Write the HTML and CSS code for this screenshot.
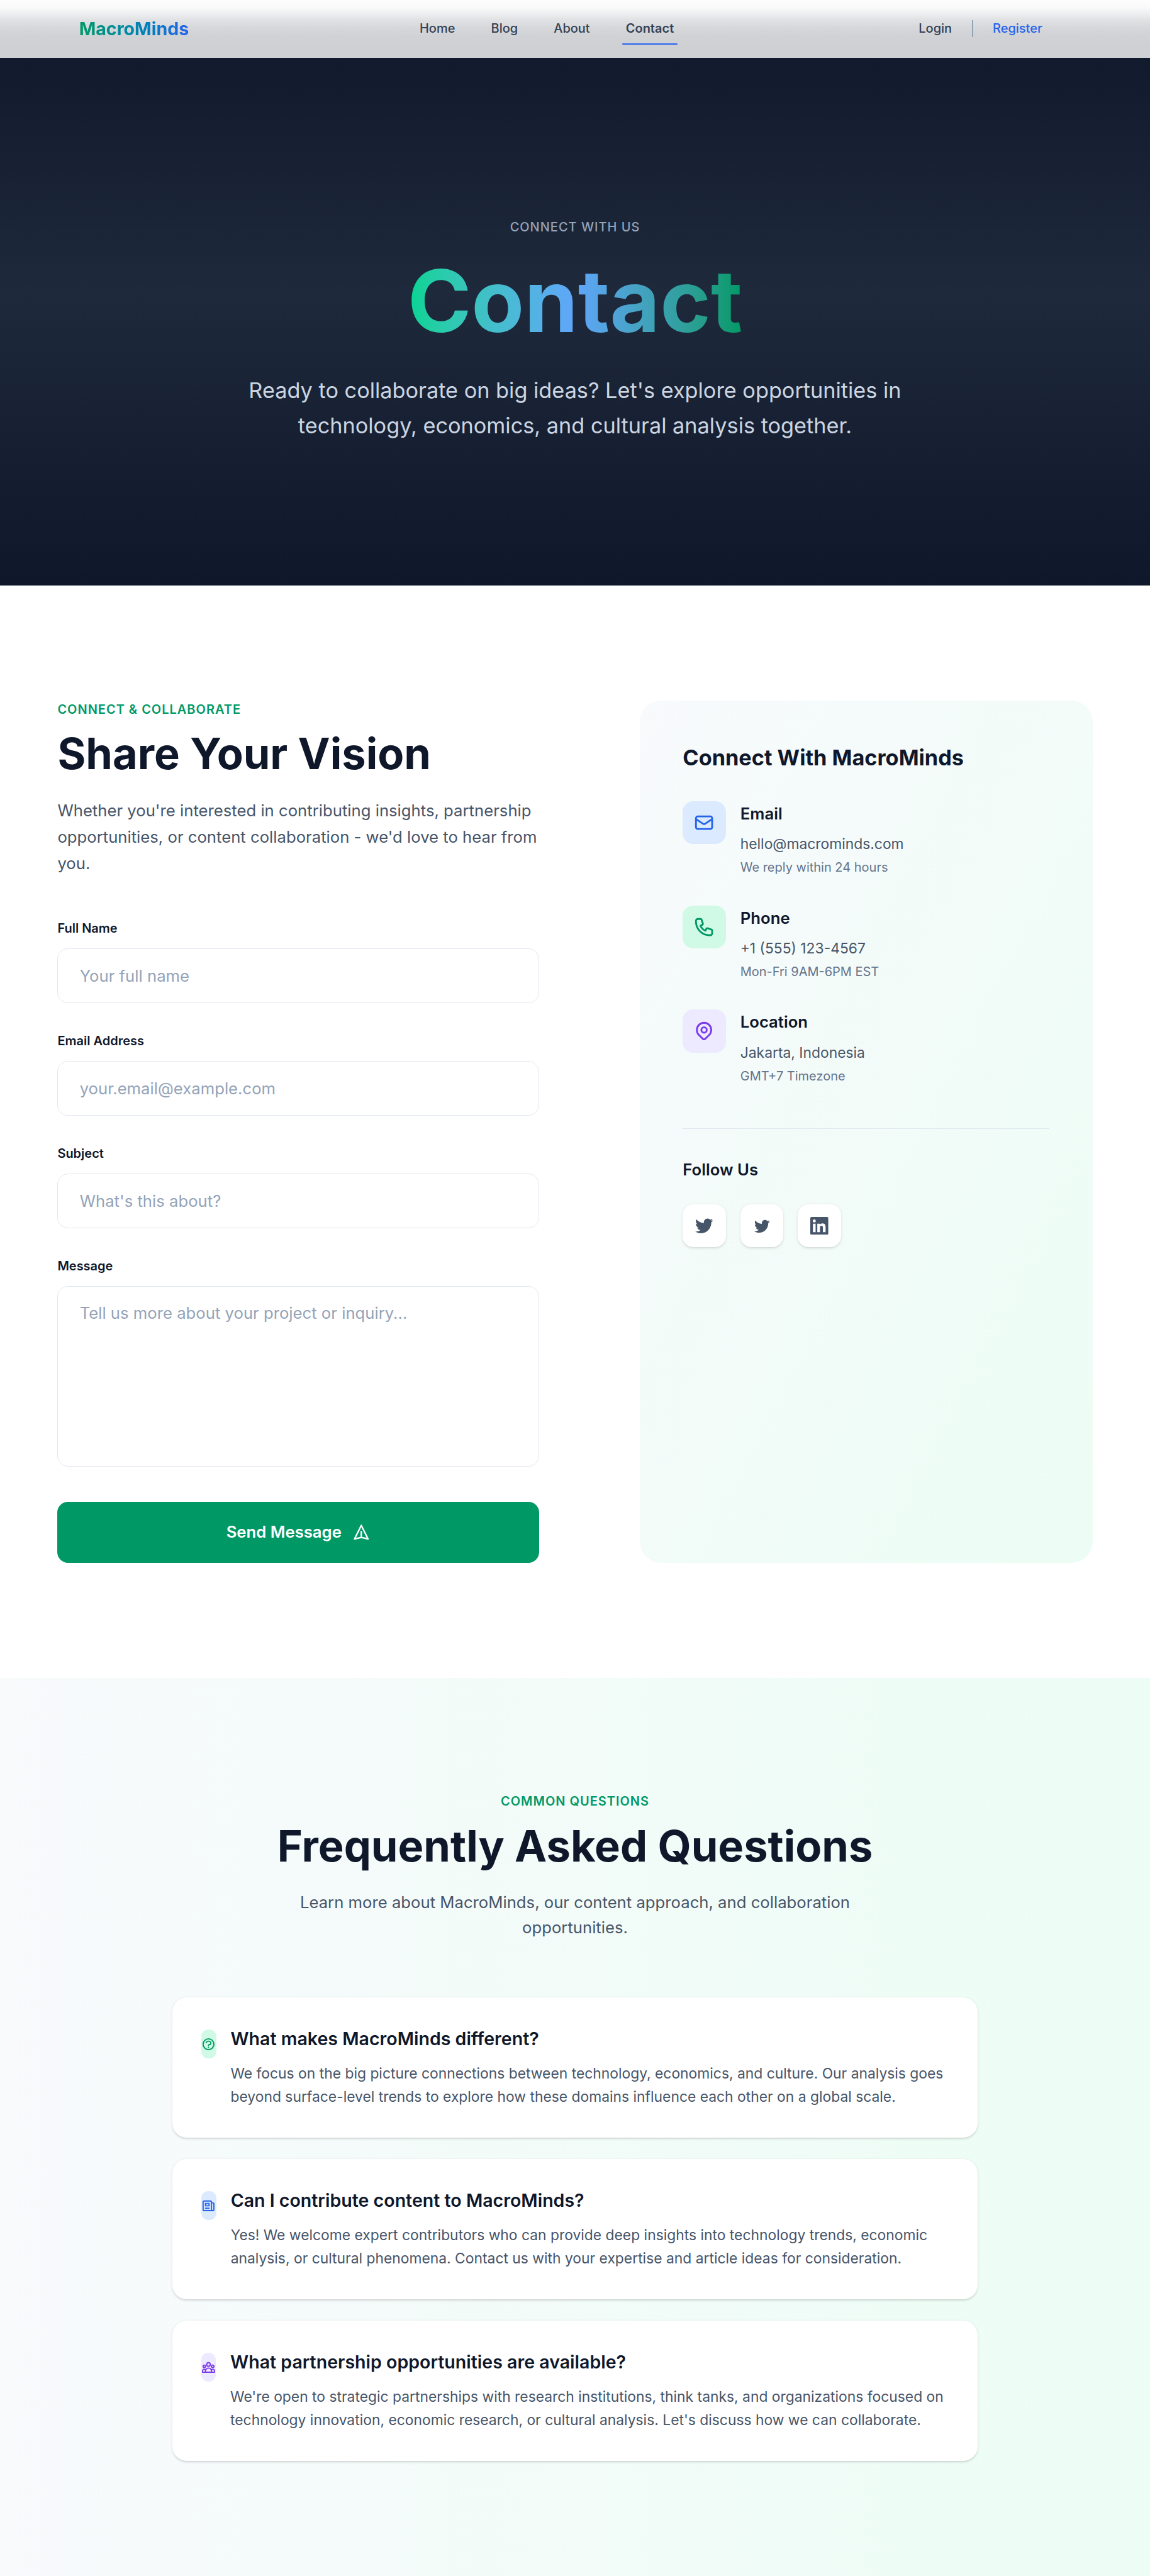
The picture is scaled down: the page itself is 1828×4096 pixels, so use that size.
FILE: index.html
```html
<!DOCTYPE html>
<html lang="en">
<head>
<meta charset="utf-8">
<title>Contact - MacroMinds</title>
<link rel="stylesheet" href="styles.css">
</head>
<body>
<div class="top">
  <header class="nav">
    <a class="logo">MacroMinds</a>
    <nav class="links">
      <a>Home</a><a>Blog</a><a>About</a><a class="active">Contact</a>
    </nav>
    <div class="auth"><a>Login</a><span class="sep"></span><a class="register">Register</a></div>
  </header>
  <section class="hero">
    <p class="hero-label">CONNECT WITH US</p>
    <h1>Contact</h1>
    <p class="hero-text">Ready to collaborate on big ideas? Let's explore opportunities in technology, economics, and cultural analysis together.</p>
  </section>
</div>

<section class="contact">
  <div class="form-col">
    <p class="eyebrow">CONNECT &amp; COLLABORATE</p>
    <h2>Share Your Vision</h2>
    <p class="intro">Whether you're interested in contributing insights, partnership opportunities, or content collaboration - we'd love to hear from you.</p>
    <form class="form">
      <div class="field"><label>Full Name</label><input type="text" placeholder="Your full name"></div>
      <div class="field"><label>Email Address</label><input type="email" placeholder="your.email@example.com"></div>
      <div class="field"><label>Subject</label><input type="text" placeholder="What's this about?"></div>
      <div class="field message"><label>Message</label><textarea placeholder="Tell us more about your project or inquiry..."></textarea></div>
      <button type="button" class="send"><span>Send Message</span>
        <svg class="line" viewBox="0 0 24 24"><path d="M12 19l9 2-9-18-9 18 9-2zm0 0v-8"/></svg>
      </button>
    </form>
  </div>

  <aside class="card">
    <h3>Connect With MacroMinds</h3>
    <div class="ways">
      <div class="way">
        <div class="tile blue"><svg class="line" viewBox="0 0 24 24"><path d="M3 8l7.89 5.26a2 2 0 002.22 0L21 8M5 19h14a2 2 0 002-2V7a2 2 0 00-2-2H5a2 2 0 00-2 2v10a2 2 0 002 2z"/></svg></div>
        <div><h4>Email</h4><p class="value">hello@macrominds.com</p><p class="note">We reply within 24 hours</p></div>
      </div>
      <div class="way">
        <div class="tile green"><svg class="line" viewBox="0 0 24 24"><path d="M3 5a2 2 0 012-2h3.28a1 1 0 01.948.684l1.498 4.493a1 1 0 01-.502 1.21l-2.257 1.13a11.042 11.042 0 005.516 5.516l1.13-2.257a1 1 0 011.21-.502l4.493 1.498a1 1 0 01.684.949V19a2 2 0 01-2 2h-1C9.716 21 3 14.284 3 6V5z"/></svg></div>
        <div><h4>Phone</h4><p class="value">+1 (555) 123-4567</p><p class="note">Mon-Fri 9AM-6PM EST</p></div>
      </div>
      <div class="way">
        <div class="tile violet"><svg class="line" viewBox="0 0 24 24"><path d="M17.657 16.657L13.414 20.9a1.998 1.998 0 01-2.827 0l-4.244-4.243a8 8 0 1111.314 0z"/><path d="M15 11a3 3 0 11-6 0 3 3 0 016 0z"/></svg></div>
        <div><h4>Location</h4><p class="value">Jakarta, Indonesia</p><p class="note">GMT+7 Timezone</p></div>
      </div>
    </div>
    <div class="follow">
      <h4>Follow Us</h4>
      <div class="socials">
        <a class="social"><svg viewBox="0 0 24 24"><path d="M23.953 4.57a10 10 0 01-2.825.775 4.958 4.958 0 002.163-2.723c-.951.555-2.005.959-3.127 1.184a4.92 4.92 0 00-8.384 4.482C7.69 8.095 4.067 6.13 1.64 3.162a4.822 4.822 0 00-.666 2.475c0 1.71.87 3.213 2.188 4.096a4.904 4.904 0 01-2.228-.616v.06a4.923 4.923 0 003.946 4.827 4.996 4.996 0 01-2.212.085 4.936 4.936 0 004.604 3.417 9.867 9.867 0 01-6.102 2.105c-.39 0-.779-.023-1.17-.067a13.995 13.995 0 007.557 2.209c9.053 0 13.998-7.496 13.998-13.985 0-.21 0-.42-.015-.63A9.935 9.935 0 0024 4.59z"/></svg></a>
        <a class="social"><svg viewBox="0 0 24 24"><path d="M22.46 6c-.77.35-1.6.58-2.46.69.88-.53 1.56-1.37 1.88-2.38-.83.5-1.75.85-2.72 1.05C18.37 4.5 17.26 4 16 4c-2.35 0-4.27 1.92-4.27 4.29 0 .34.04.67.11.98C8.28 9.09 5.11 7.38 3 4.79c-.37.63-.58 1.37-.58 2.15 0 1.49.75 2.81 1.91 3.56-.71 0-1.37-.2-1.95-.5v.03c0 2.08 1.48 3.82 3.44 4.21a4.22 4.22 0 01-1.93.07 4.28 4.28 0 004 2.98 8.521 8.521 0 01-5.33 1.84c-.34 0-.68-.02-1.02-.06C3.44 20.29 5.7 21 8.12 21 16 21 20.33 14.46 20.33 8.79c0-.19 0-.37-.01-.56.84-.6 1.56-1.36 2.14-2.23z"/></svg></a>
        <a class="social"><svg viewBox="0 0 24 24"><path d="M20.447 20.452h-3.554v-5.569c0-1.328-.027-3.037-1.852-3.037-1.853 0-2.136 1.445-2.136 2.939v5.667H9.351V9h3.414v1.561h.046c.477-.9 1.637-1.85 3.37-1.85 3.601 0 4.267 2.37 4.267 5.455v6.286zM5.337 7.433a2.062 2.062 0 01-2.063-2.065 2.064 2.064 0 112.063 2.065zm1.782 13.019H3.555V9h3.564v11.452zM22.225 0H1.771C.792 0 0 .774 0 1.729v20.542C0 23.227.792 24 1.771 24h20.451C23.2 24 24 23.227 24 22.271V1.729C24 .774 23.2 0 22.222 0h.003z"/></svg></a>
      </div>
    </div>
  </aside>
</section>

<section class="faq">
  <p class="eyebrow">COMMON QUESTIONS</p>
  <h2>Frequently Asked Questions</h2>
  <p class="faq-intro">Learn more about MacroMinds, our content approach, and collaboration opportunities.</p>
  <div class="faq-list">
    <article class="question">
      <div class="badge green"><svg class="line" viewBox="0 0 24 24"><path d="M8.228 9c.549-1.165 2.03-2 3.772-2 2.21 0 4 1.343 4 3 0 1.4-1.278 2.575-3.006 2.907-.542.104-.994.54-.994 1.093m0 3h.01M21 12a9 9 0 11-18 0 9 9 0 0118 0z"/></svg></div>
      <div><h3>What makes MacroMinds different?</h3>
      <p>We focus on the big picture connections between technology, economics, and culture. Our analysis goes beyond surface-level trends to explore how these domains influence each other on a global scale.</p></div>
    </article>
    <article class="question">
      <div class="badge blue"><svg class="line" viewBox="0 0 24 24"><path d="M19 20H5a2 2 0 01-2-2V6a2 2 0 012-2h10a2 2 0 012 2v1m2 13a2 2 0 01-2-2V7m2 13a2 2 0 002-2V9a2 2 0 00-2-2h-2m-4-3H9M7 16h6M7 8h6v4H7V8z"/></svg></div>
      <div><h3>Can I contribute content to MacroMinds?</h3>
      <p>Yes! We welcome expert contributors who can provide deep insights into technology trends, economic analysis, or cultural phenomena. Contact us with your expertise and article ideas for consideration.</p></div>
    </article>
    <article class="question">
      <div class="badge violet"><svg class="line" viewBox="0 0 24 24"><path d="M17 20h5v-2a3 3 0 00-5.356-1.857M17 20H7m10 0v-2c0-.656-.126-1.283-.356-1.857M7 20H2v-2a3 3 0 015.356-1.857M7 20v-2c0-.656.126-1.283.356-1.857m0 0a5.002 5.002 0 019.288 0M15 7a3 3 0 11-6 0 3 3 0 016 0zm6 3a2 2 0 11-4 0 2 2 0 014 0zM7 10a2 2 0 11-4 0 2 2 0 014 0z"/></svg></div>
      <div><h3>What partnership opportunities are available?</h3>
      <p>We're open to strategic partnerships with research institutions, think tanks, and organizations focused on technology innovation, economic research, or cultural analysis. Let's discuss how we can collaborate.</p></div>
    </article>
  </div>
</section>
</body>
</html>
```
FILE: styles.css
```css
/* 80rem spans the 1828px page */
html { font-size: 22.85px; }
*, *::before, *::after { box-sizing: border-box; margin: 0; padding: 0; }
body { font-family: Inter, "Liberation Sans", sans-serif; line-height: 1.5; color: #0f172a; background: #fff; }
svg { display: block; flex: none; fill: currentColor; }
svg.line { fill: none; stroke: currentColor; stroke-width: 2; stroke-linecap: round; stroke-linejoin: round; }

.top { background: linear-gradient(to bottom, #0f172a, #1e293b 50%, #0f172a); height: 40.75rem; }

.nav {
  height: 4.04rem; padding: 0 5.55rem 0.04rem 5.5rem; display: flex; align-items: center;
  background: linear-gradient(to bottom, #fdfdfd 0, #fafafa 12%, #eff0f1 23%, #e1e2e4 34%, #d7d8db 47%, #d1d2d5 62%, #cfd0d3 80%, #cfd0d3 100%);
  font-size: 0.875rem; line-height: 1.25rem; font-weight: 500; color: #334155;
}
.logo {
  width: 23.44rem;
  font-size: 1.25rem; line-height: 1.75rem; font-weight: 700;
}
.logo {
  background: linear-gradient(to right in oklab, #009966, #2563eb 7.6rem); -webkit-background-clip: text; background-clip: text; color: transparent;
}
.links { display: flex; gap: 2rem; }
.links a { padding: 0.5rem 0.25rem; position: relative; }
.links .active { font-weight: 600; }
.links .active::after { content: ""; position: absolute; left: 0; right: 0; bottom: 0; height: 0.125rem; border-radius: 1rem; background: #2563eb; }
.auth { margin-left: auto; display: flex; align-items: center; gap: 1.375rem; padding-right: 1.95rem; }
.sep { width: 0.09rem; height: 1.2rem; background: #94a3b8; }
.register { color: #2563eb; }

.hero { padding-top: 11.16rem; display: flex; flex-direction: column; align-items: center; text-align: center; }
.hero-label { font-size: 0.875rem; line-height: 1.25rem; font-weight: 500; letter-spacing: 0.05em; color: #94a3b8; margin-bottom: 1.5rem; }
.hero h1 {
  font-size: 6rem; line-height: 1; font-weight: 700; margin-bottom: 2rem;
  background: linear-gradient(to right in oklab, #00d492, #60a5fa, #009966); -webkit-background-clip: text; background-clip: text; color: transparent;
}
.hero-text { width: 48rem; font-size: 1.5rem; line-height: 1.625; color: #cbd5e1; }

.eyebrow { font-size: 0.875rem; line-height: 1.25rem; font-weight: 600; letter-spacing: 0.05em; color: #009966; margin-bottom: 1rem; }
h2 { font-size: 3rem; line-height: 1; font-weight: 700; margin-bottom: 1.5rem; }

.contact { padding: 8rem 4rem; display: grid; grid-template-columns: 33.5rem 31.5rem; column-gap: 7rem; }
.intro { font-size: 1.125rem; line-height: 1.625; color: #475569; margin-bottom: 3rem; }
.form { display: flex; flex-direction: column; gap: 2rem; }
.field { display: flex; flex-direction: column; }
.field label { font-size: 0.875rem; line-height: 1.25rem; font-weight: 600; margin-bottom: 0.75rem; }
.field input, .field textarea {
  font: inherit; font-size: 1.125rem; line-height: 1.75rem; border: 1px solid #e2e8f0; border-radius: 0.75rem;
  padding: 0 1.5rem; height: 3.833rem; width: 100%; background: #fff; resize: none; outline: none; display: block;
}
.field textarea { height: 12.58rem; padding: 1rem 1.5rem; }
.field ::placeholder { color: #94a3b8; opacity: 1; }
.message { margin-bottom: 0.44rem; }
.send {
  height: 4.25rem; border: 0; border-radius: 0.75rem; background: #009966; color: #fff;
  font: 600 1.125rem/1.75rem Inter, "Liberation Sans", sans-serif; display: flex; align-items: center; justify-content: center; gap: 0.75rem;
}
.send svg { width: 1.25rem; height: 1.25rem; }

.card { border-radius: 1.5rem; padding: 3rem; background: linear-gradient(to bottom right in oklab, #f8fafc, #ecfdf5); }
.card h3 { font-size: 1.5rem; line-height: 2rem; font-weight: 700; margin-bottom: 2rem; }
.card h4 { font-size: 1.125rem; line-height: 1.75rem; font-weight: 600; }
.ways { display: flex; flex-direction: column; gap: 2rem; margin-bottom: 3rem; }
.way { display: flex; gap: 1rem; }
.tile { width: 3rem; height: 3rem; border-radius: 0.75rem; display: flex; align-items: center; justify-content: center; }
.tile svg { width: 1.5rem; height: 1.5rem; }
.blue { background: #dbeafe; color: #2563eb; }
.green { background: #d0fae5; color: #009966; }
.violet { background: #ede9fe; color: #7c3aed; }
.value { margin-top: 0.5rem; line-height: 1.5rem; font-size: 1rem; color: #475569; }
.note { margin-top: 0.25rem; font-size: 0.875rem; line-height: 1.25rem; color: #64748b; }
.follow { border-top: 1px solid #e2e8f0; padding-top: 2rem; }
.follow h4 { margin-bottom: 1.5rem; }
.socials { display: flex; gap: 1rem; }
.social { width: 3rem; height: 3rem; border-radius: 0.75rem; background: #fff; color: #475569; display: flex; align-items: center; justify-content: center; box-shadow: 0 0.0625rem 0.1875rem rgba(0,0,0,.1), 0 0.0625rem 0.125rem -0.0625rem rgba(0,0,0,.1); }
.social svg { width: 1.25rem; height: 1.25rem; }

.faq { padding: 8rem 12rem; text-align: center; background: linear-gradient(to right in oklab, #f8fafc, #ecfdf5); height: 62.52rem; }
.faq-intro { width: 42rem; margin: 0 auto 4rem; font-size: 1.125rem; line-height: 1.75rem; color: #475569; }
.faq-list { display: flex; flex-direction: column; gap: 1.5rem; text-align: left; }
.question { display: flex; padding: 2rem; border-radius: 1rem; background: #fff; box-shadow: 0 0.0625rem 0.1875rem rgba(0,0,0,.1), 0 0.0625rem 0.125rem -0.0625rem rgba(0,0,0,.1); }
.badge { width: 2rem; height: 2rem; margin: 0.25rem 1rem 0 0; border-radius: 0.5rem; display: flex; align-items: center; justify-content: center; min-width: 0; }
.badge svg { width: 1rem; height: 1rem; }
.question h3 { font-size: 1.25rem; line-height: 1.75rem; font-weight: 600; margin-bottom: 0.75rem; }
.question p { font-size: 1rem; line-height: 1.625; color: #475569; }
```
